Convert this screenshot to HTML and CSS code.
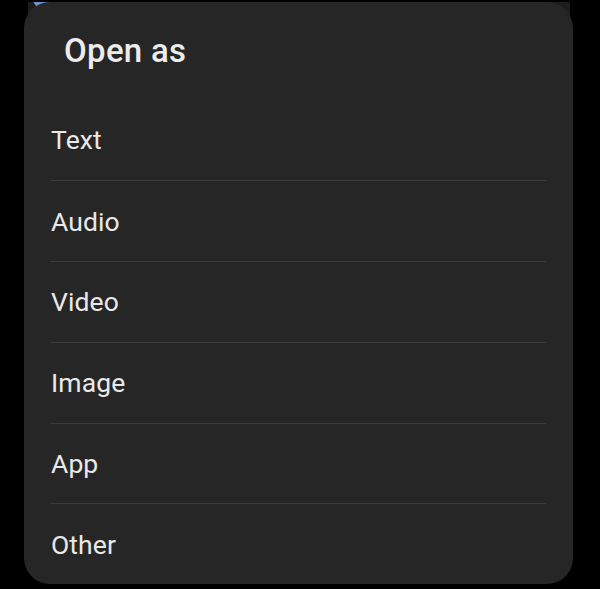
FILE: index.html
```html
<!DOCTYPE html>
<html lang="en">
<head>
<meta charset="utf-8">
<title>Open as</title>
<link rel="stylesheet" href="styles.css">
</head>
<body>
<div class="screen">
  <div class="behind">
    <span class="avatar"></span>
    <span class="behind-line"></span>
  </div>
  <div class="dialog">
    <h1 class="title">Open as</h1>
    <ul class="options">
      <li class="option">Text</li>
      <li class="option">Audio</li>
      <li class="option">Video</li>
      <li class="option">Image</li>
      <li class="option">App</li>
      <li class="option">Other</li>
    </ul>
  </div>
</div>
</body>
</html>
```

FILE: styles.css
```css
html, body {
  margin: 0;
  padding: 0;
  background: #000;
}
body {
  width: 600px;
  height: 589px;
  overflow: hidden;
  font-family: Roboto, "Noto Sans", "Liberation Sans", sans-serif;
}
.screen {
  position: relative;
  width: 600px;
  height: 589px;
}
.behind {
  position: absolute;
  left: 28px;
  right: 30px;
  top: 0;
  height: 30px;
  background: #1d1d1f;
  overflow: hidden;
}
.avatar {
  position: absolute;
  left: 2px;
  top: -44px;
  width: 60px;
  height: 60px;
  border-radius: 50%;
  background: #7193cf;
}
.behind-line {
  position: absolute;
  left: 92px;
  top: 0;
  width: 72px;
  height: 2px;
  background: #5a5a5a;
  opacity: 0.6;
}
.dialog {
  position: relative;
  margin: 2px 0 0 24px;
  width: 549px;
  height: 582px;
  background: #262626;
  border-radius: 26px;
  box-sizing: border-box;
  display: flex;
  flex-direction: column;
}
.title {
  margin: 0;
  height: 98px;
  box-sizing: border-box;
  padding: 0 0 0 40px;
  display: flex;
  align-items: center;
  font-size: 33px;
  font-weight: 500;
  color: #ececec;
  letter-spacing: 0.3px;
}
.options {
  list-style: none;
  margin: 0 27px 0 28px;
  padding: 0;
}
.option {
  height: 80.75px;
  box-sizing: border-box;
  display: flex;
  align-items: center;
  font-size: 26.5px;
  color: #e9e9e9;
  margin-left: -1px;
  letter-spacing: 0.1px;
}
.option + .option {
  border-top: 1px solid #3b3b3b;
}
```
